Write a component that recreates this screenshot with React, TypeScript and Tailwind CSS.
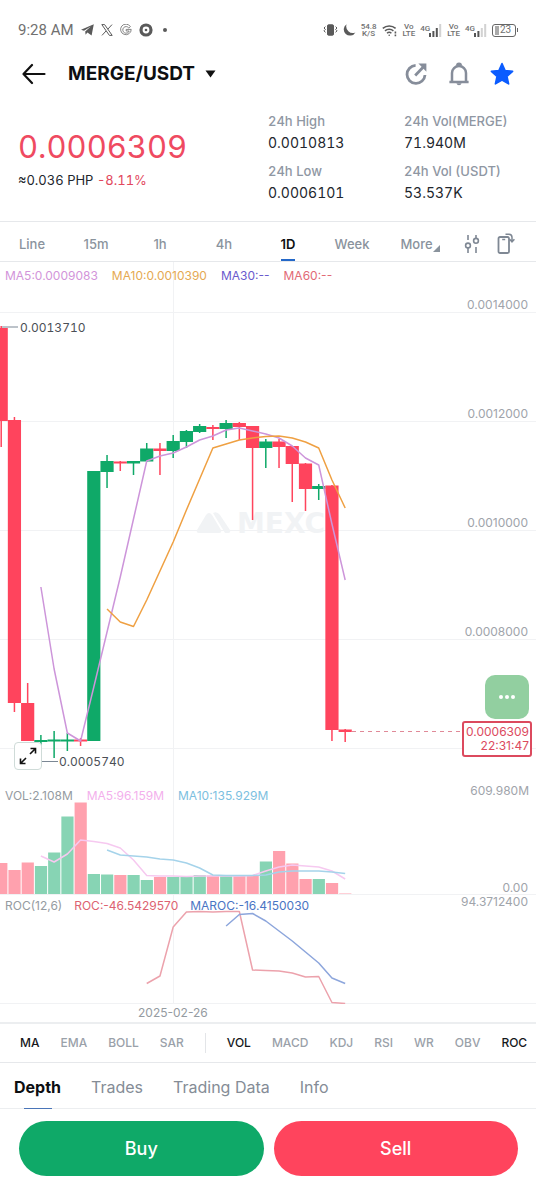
import type { ReactNode } from "react";

const UP = "#0fa968";
const DOWN = "#ff445d";
const GRID = "#f1f2f4";

const STEP = 13.23;
const cx = (i: number) => 1.2 + STEP * i;

// [up, open/close top, open/close bottom, high, low]
const candles: [number, number, number, number, number][] = [
  [0, 328, 421, 326, 447],
  [0, 420, 703, 417, 712],
  [0, 703, 741, 683, 741],
  [1, 740, 742, 735, 762],
  [1, 739.5, 741.5, 731, 758],
  [1, 739.5, 741.5, 733, 751],
  [0, 739.5, 741.5, 738, 746],
  [1, 471, 741, 471, 741],
  [1, 461, 472, 455, 488],
  [0, 461.5, 463.5, 461, 471],
  [1, 461, 463.5, 461, 475],
  [1, 448.5, 461.5, 443, 462],
  [0, 448.5, 451, 443, 475],
  [1, 441, 451, 435, 458],
  [1, 431, 442, 430, 448],
  [1, 426, 432, 424, 433],
  [0, 427, 429, 425, 440],
  [1, 423, 429, 420, 438],
  [0, 423, 427, 422, 440],
  [0, 426, 448, 426, 520],
  [1, 441.5, 448, 439, 468],
  [0, 441.5, 447, 439, 468],
  [0, 446, 464, 446, 502],
  [0, 463.5, 489, 463, 511],
  [1, 486, 489, 484, 500],
  [0, 485.5, 730, 485, 741],
  [0, 729.5, 732, 729, 742],
];

const volumes = [
  863, 870, 862.5, 866, 852.5, 816.5, 802.5, 874, 874.5, 875, 875, 880, 877, 877, 876, 875, 875.5,
  876, 876, 876, 861.5, 851, 863.5, 879, 879, 883, 893.5,
];

const ma5 = [
  587, 669, 733, 741, 687, 632, 577, 519, 461, 456, 453, 447, 440, 436, 430, 428, 431, 434, 438,
  446, 458, 465, 524, 580,
];
const ma10 = [
  609, 622, 626.5, 600, 571, 542, 510, 479, 448, 444, 440, 438, 436.5, 436, 438, 442, 448, 480, 508,
];
const volMa5 = [
  856, 862, 854, 840, 841.5, 843.5, 848, 860, 875.5, 876, 876, 876.5, 876, 876, 876, 876, 875.5,
  871, 867, 865, 866, 867, 871, 879,
];
const volMa10 = [
  850, 855, 856, 857, 859, 860, 863, 868, 875, 875.5, 875.5, 875.5, 875, 872, 871, 871, 871, 872,
  873.5,
];
const roc = [
  983.5, 976, 927, 912, 911.5, 912, 911.5, 911.5, 970, 970.5, 971, 973, 977, 976.5, 1002.5, 1003.5,
];
const maroc = [926, 914.5, 913.5, 921, 931, 941, 952, 963, 978, 983.5];

const gridRows = [
  { y: 312, label: "0.0014000" },
  { y: 421, label: "0.0012000" },
  { y: 530, label: "0.0010000" },
  { y: 639, label: "0.0008000" },
  { y: 748, label: "" },
];

const Series = ({ data, start, color }: { data: number[]; start: number; color: string }) => (
  <polyline
    points={data.map((y, i) => `${cx(start + i)},${y}`).join(" ")}
    fill="none"
    stroke={color}
    strokeWidth="1.5"
    strokeLinejoin="round"
  />
);

const Pane = ({ top, className, children }: { top: number; className: string; children: ReactNode }) => (
  <svg className={`block w-full text-[12px] ${className}`} aria-hidden="true">
    <g transform={`translate(0 ${-top})`}>
      <line x1="173.5" x2="173.5" y1={top} y2={top + 522} stroke={GRID} />
      {children}
    </g>
  </svg>
);

const Legend = ({ items, className }: { items: [string, string][]; className: string }) => (
  <div className={`absolute left-[5px] flex text-[12px] leading-4 ${className}`}>
    {items.map(([text, color]) => (
      <span key={text} className={color}>
        {text}
      </span>
    ))}
  </div>
);

const Stat = ({ label, value }: { label: string; value: string }) => (
  <div>
    <dt className="text-[13px] leading-5 font-medium text-[#8f97a3]">{label}</dt>
    <dd className="mt-0.5 text-[14px] leading-5 text-[#22262d]">{value}</dd>
  </div>
);

const TwoLine = ({ a, b }: { a: string; b: string }) => (
  <span className="flex flex-col text-center text-[8px] leading-[7px] font-medium">
    <span>{a}</span>
    <span>{b}</span>
  </span>
);

const Signal = ({ bars }: { bars: number }) => (
  <span className="flex">
    <span className="-mr-0.5 text-[8px] leading-[9px] font-medium">4G</span>
    <svg width="14" height="13" viewBox="0 0 14 13">
      {[9, 7, 4, 0].map((y, i) => (
        <rect key={y} x={1 + i * 3.4} y={y} width="2" height={13 - y} fill={i < bars ? "#555" : "#d2d2d2"} />
      ))}
    </svg>
  </span>
);

const StatusBar = () => (
  <div className="flex h-5 items-center justify-between pr-4.5 pl-4.5 font-[Roboto,sans-serif] text-[#707070]">
    <div className="flex items-center gap-[7px]">
      <span className="text-[15px] leading-5">9:28 AM</span>
      <svg width="13" height="12" viewBox="0 0 13 12" fill="#5a5a5a">
        <path d="M0 5.8 12.8.2 10.6 11.6 6.4 8.6 4.6 10.8 4.2 7.4 9.8 2.6 3 6.8Z" />
      </svg>
      <svg width="12" height="12" viewBox="0 0 12 12" fill="none" stroke="#5a5a5a">
        <path d="M.8.6H3.6L11.2 11.4H8.4ZM11 .6 6.8 5.2M5 7 1 11.4" />
      </svg>
      <svg width="12" height="12" viewBox="0 0 12 12" fill="none" stroke="#777">
        <path d="M10.4 2.6A5.3 5.3 0 1 0 11.2 5.4H6.2V7H9.2A3.3 3.3 0 1 1 8.8 4Z" strokeWidth=".9" />
      </svg>
      <svg width="14" height="14" viewBox="0 0 14 14">
        <circle cx="7" cy="7" r="5" fill="none" stroke="#5a5a5a" strokeWidth="3.2" />
        <circle cx="7" cy="7" r="1.3" fill="#5a5a5a" />
      </svg>
      <svg width="12" height="6" viewBox="0 0 12 6">
        <circle cx="5" cy="3" r="2" fill="#5a5a5a" />
      </svg>
    </div>
    <div className="flex items-center gap-[5px]">
      <svg width="15" height="12" viewBox="0 0 15 12" fill="none" stroke="#5a5a5a">
        <rect x="4.5" y=".8" width="6" height="10.4" rx="1" fill="#5a5a5a" />
        <path d="M2.4 2.6 1 4 2.4 5.4 1 6.8 2.4 8.4M12.6 2.6 14 4 12.6 5.4 14 6.8 12.6 8.4" />
      </svg>
      <svg width="13" height="12" viewBox="0 0 13 12" fill="#5a5a5a">
        <path d="M3.6.2A6.2 6.2 0 1 0 12.4 8.4 6.6 6.6 0 0 1 3.6.2Z" />
      </svg>
      <TwoLine a="54.8" b="K/S" />
      <svg width="16" height="13" viewBox="0 0 16 13" fill="none" stroke="#5a5a5a" strokeWidth="1.5">
        <path d="M.8 4.4a9.4 9.4 0 0 1 12.8 0M3 6.9a6.2 6.2 0 0 1 8.4 0M5 9.2a3.3 3.3 0 0 1 4.4 0" />
        <circle cx="7.2" cy="11.2" r=".8" fill="#5a5a5a" stroke="none" />
        <path d="M13.4 7.6V9.4M13.4 10.4V12.2" strokeWidth="1.6" />
      </svg>
      <TwoLine a="Vo" b="LTE" />
      <Signal bars={3} />
      <TwoLine a="Vo" b="LTE" />
      <Signal bars={2} />
      <span className="flex items-center">
        <span className="flex h-[13px] w-6 items-center rounded-[3px] border border-[#666] pl-0.5 text-[10px] leading-none">
          <span className="mr-px h-[9px] w-1 bg-[#aaa]" />
          23
        </span>
        <span className="ml-px h-1 w-px bg-[#666]" />
      </span>
    </div>
  </div>
);

const Header = () => (
  <header className="mt-3 flex h-11 items-center px-[22px]">
    <button type="button" aria-label="Back">
      <svg width="25" height="22" viewBox="0 0 25 22" fill="none" stroke="#111" strokeWidth="2.2" strokeLinecap="round" strokeLinejoin="round">
        <path d="M22.500 11H1.500M10 2 1.500 11l8.500 9" />
      </svg>
    </button>
    <button type="button" className="ml-[21px] flex items-center gap-2.5">
      <h1 className="text-[19px] leading-6 font-bold text-[#0d0f12]">MERGE/USDT</h1>
      <svg width="11" height="8" viewBox="0 0 11 8">
        <path d="M.5.5h10L5.5 7.5Z" fill="#111" />
      </svg>
    </button>
    <div className="ml-auto flex items-center gap-[19px]">
      <button type="button" aria-label="Share">
        <svg width="24" height="24" viewBox="0 0 24 24" fill="none" stroke="#868d9a" strokeWidth="2.8">
          <path d="M11.6 3.4A9 9 0 1 0 21 13" />
          <path d="m11.2 13.4 8.6-8.8" />
          <path d="M14.4 1.6H22.4V9.8Z" fill="#868d9a" stroke="none" />
        </svg>
      </button>
      <button type="button" aria-label="Price alert">
        <svg width="24" height="24" viewBox="0 0 24 24" fill="none" stroke="#868d9a" strokeWidth="2.5">
          <path d="M5 20V11a7 7 0 0 1 14 0v9M2.4 20H21.6" />
          <path d="M9 3.4a3 3 0 0 1 6 0ZM9.4 21.2a2.7 2.7 0 0 0 5.2 0Z" fill="#868d9a" stroke="none" />
        </svg>
      </button>
      <button type="button" aria-label="Favorite">
        <svg width="24" height="24" viewBox="0 0 24 24" fill="#0b5cff" stroke="#0b5cff" strokeWidth="1.6" strokeLinejoin="round">
          <path d="m12 1.6 3.1 6.9 7.5.8-5.6 5 1.6 7.6L12 18.1l-6.6 3.8L7 14.3l-5.6-5 7.5-.8Z" />
        </svg>
      </button>
    </div>
  </header>
);

const Summary = () => (
  <section className="flex border-b border-[#e6e8eb] pt-[15px] pr-5 pb-[18px] pl-[18px] tabular-nums">
    <div className="flex-1 pt-4">
      <p className="text-[31px] leading-10 text-[#ef4a61]">0.0006309</p>
      <p className="mt-[3px] text-[13px] leading-5 text-[#22262d]">
        ≈0.036 PHP <span className="text-[#e2485e]">-8.11%</span>
      </p>
    </div>
    <dl className="grid grid-cols-[136px_112px] gap-y-2">
      <Stat label="24h High" value="0.0010813" />
      <Stat label="24h Vol(MERGE)" value="71.940M" />
      <Stat label="24h Low" value="0.0006101" />
      <Stat label="24h Vol (USDT)" value="53.537K" />
    </dl>
  </section>
);

const intervals = ["Line", "15m", "1h", "4h", "1D", "Week"];

const Intervals = () => (
  <nav className="flex h-10 border-b border-[#e6e8eb] text-[13px] font-medium text-[#8a939d]">
    {intervals.map((name) => (
      <button
        key={name}
        type="button"
        className={name === "1D" ? "relative flex-1 pb-1 pt-2.5 font-semibold text-[#0d0f12]" : "flex-1 pb-1 pt-2.5"}
      >
        {name}
        {name === "1D" && <span className="absolute bottom-0 left-1/2 h-0.5 w-3.5 -translate-x-1/2 bg-[#2468c8]" />}
      </button>
    ))}
    <button type="button" className="flex w-18 items-center justify-center pt-1.5">
      More
      <svg width="7" height="7" viewBox="0 0 7 7" className="mt-2">
        <path d="M7 0V7H0Z" fill="#8a939d" />
      </svg>
    </button>
    <div className="flex w-20 items-center gap-[17px] pl-2 pt-1">
      <button type="button" aria-label="Indicators">
        <svg width="16" height="20" viewBox="0 0 16 20" fill="none" stroke="#7f8894" strokeWidth="1.6">
          <path d="M4 1v5M4 14v5M12 1v3M12 13v6" />
          <circle cx="4" cy="11.5" r="2.4" />
          <circle cx="12" cy="6.8" r="2.4" />
        </svg>
      </button>
      <button type="button" aria-label="Rotate chart">
        <svg width="18" height="21" viewBox="0 0 18 21" fill="none" stroke="#7f8894" strokeWidth="1.8">
          <rect x="1.5" y="4" width="10.5" height="16" rx="1.5" />
          <path d="M5.2 6.4h3M8.5 1.2H12Q15 1.2 15 4.5V8M12.6 6.2 15 8.8l2.4-2.6" strokeWidth="1.5" />
        </svg>
      </button>
    </div>
  </nav>
);

const Chart = () => (
  <section className="border-b-2 border-[#eceef0]">
    <div className="relative">
      <Pane top={262} className="h-[522px]">
        {gridRows.map(({ y, label }) => (
          <g key={y}>
            <line x1="0" x2="100%" y1={y + 0.5} y2={y + 0.5} stroke={GRID} />
            <text x="100%" dx="-8" y={y - 3} textAnchor="end" fill="#a0a4ab">
              {label}
            </text>
          </g>
        ))}

        <g fill="#f1f3f5">
          <path d="M197 530 206 515Q209 511 212 515L221 530Q222 533 219 533H199Q196 533 197 530Z" />
          <path d="M213 513Q217 511 220 515L230 530Q231 533 228 533H225Z" />
          <text x="237" y="533" className="font-['DejaVu_Sans',sans-serif] text-[28px] font-bold">
            MEXC
          </text>
        </g>

        {candles.map(([up, top, bottom, high, low], i) => (
          <g key={i} fill={up ? UP : DOWN}>
            <rect x={cx(i) - 0.75} y={high} width="1.5" height={low - high} />
            <rect x={cx(i) - 6.6} y={top} width="13.2" height={bottom - top} />
          </g>
        ))}
        <Series data={ma5} start={3} color="#cd95da" />
        <Series data={ma10} start={8} color="#efa042" />

        <path d="M2 327H18M41 761.5H58" stroke="#7b8794" />
        <g fill="#4b4f56" className="tabular-nums">
          <text x="20" y="332">0.0013710</text>
          <text x="59" y="766">0.0005740</text>
        </g>
        <line x1="352" x2="100%" y1="731.5" y2="731.5" stroke="#e08a98" strokeDasharray="4 4" />
      </Pane>
      <Legend
        className="top-1.5 gap-3.5"
        items={[
          ["MA5:0.0009083", "text-[#d294da]"],
          ["MA10:0.0010390", "text-[#e5a952]"],
          ["MA30:--", "text-[#6a5acd]"],
          ["MA60:--", "text-[#e26a76]"],
        ]}
      />
      <button
        type="button"
        aria-label="Full screen"
        className="absolute top-[480px] left-3.5 flex h-7 w-7 items-center justify-center rounded border border-[#cfdbd8] bg-white"
      >
        <svg width="18" height="18" viewBox="0 0 18 18" fill="none" stroke="#111" strokeWidth="1.6">
          <path d="M11 7l5-5M11.5 1.5H16.5V6.5M7 11l-5 5M1.5 11.5V16.5H6.5" />
        </svg>
      </button>
      <div className="absolute top-[459px] right-1 rounded-[3px] border-2 border-[#dc4a5e] bg-white py-0.5 pr-px pl-0.5 text-right text-[12px] leading-[14px] text-[#dc4a5e]">
        0.0006309
        <br />
        22:31:47
      </div>
      <button
        type="button"
        aria-label="More actions"
        className="absolute top-[413px] right-[7px] flex h-11 w-11 items-center justify-center gap-0.5 rounded-[10px] bg-[#92cfa0]"
      >
        <span className="h-1 w-1 rounded-full bg-white" />
        <span className="h-1 w-1 rounded-full bg-white" />
        <span className="h-1 w-1 rounded-full bg-white" />
      </button>
    </div>

    <div className="relative">
      <Pane top={784} className="h-[110px]">
        {volumes.map((y, i) => (
          <rect key={i} x={cx(i) - 6} y={y} width="12.2" height={894 - y} fill={candles[i][0] ? "#87d4b4" : "#ffa1ae"} />
        ))}
        <Series data={volMa5} start={3} color="#f6c9f0" />
        <Series data={volMa10} start={8} color="#a5d3ea" />
        <g fill="#a0a4ab" textAnchor="end">
          <text x="100%" dx="-7" y="795">609.980M</text>
          <text x="100%" dx="-8" y="892">0.00</text>
        </g>
      </Pane>
      <Legend
        className="top-1 gap-3.5"
        items={[
          ["VOL:2.108M", "text-[#959ba1]"],
          ["MA5:96.159M", "text-[#f3b0ec]"],
          ["MA10:135.929M", "text-[#7cc0e0]"],
        ]}
      />
    </div>

    <div className="relative">
      <Pane top={894} className="h-[110px]">
        <line x1="0" x2="100%" y1="894.5" y2="894.5" stroke={GRID} />
        <line x1="0" x2="100%" y1="1003.5" y2="1003.5" stroke={GRID} />
        <Series data={roc} start={11} color="#eca2ac" />
        <Series data={maroc} start={17} color="#8da6dc" />
        <text x="100%" dx="-8" y="906" textAnchor="end" fill="#a0a4ab">94.3712400</text>
      </Pane>
      <Legend
        className="top-1 gap-3"
        items={[
          ["ROC(12,6)", "text-[#959ba1]"],
          ["ROC:-46.5429570", "text-[#dd6271]"],
          ["MAROC:-16.4150030", "text-[#4a75c4]"],
        ]}
      />
    </div>
    <p className="pl-[138px] text-[12px] leading-[18px] text-[#959ba1]">2025-02-26</p>
  </section>
);

const Indicators = () => {
  const main = ["MA", "EMA", "BOLL", "SAR"];
  const sub = ["VOL", "MACD", "KDJ", "RSI", "WR", "OBV", "ROC"];
  const active = ["MA", "VOL", "ROC"];
  const item = (name: string) => (
    <button key={name} type="button" className={active.includes(name) ? "text-[#16181c]" : "text-[#9aa1a9]"}>
      {name}
    </button>
  );

  return (
    <div className="flex h-[39px] items-center gap-[21px] overflow-hidden border-b border-[#e6e8eb] pl-5 text-[12px] font-medium">
      {main.map(item)}
      <span className="h-5 w-px shrink-0 bg-[#e3e5e8]" />
      {sub.map(item)}
    </div>
  );
};

const sections = ["Depth", "Trades", "Trading Data", "Info"];

export default function App() {
  return (
    <div className="overflow-hidden bg-white pt-5 pb-6 font-[Inter,sans-serif]">
      <StatusBar />
      <Header />
      <Summary />
      <Intervals />
      <Chart />
      <Indicators />
      <nav className="flex h-[46px] gap-[30px] border-b border-[#eceef0] pl-3.5 text-[16px] text-[#858c96]">
        {sections.map((name) => (
          <button key={name} type="button" className={name === "Depth" ? "relative pt-0.5 font-bold text-[#0d0f12]" : "pt-0.5"}>
            {name}
            {name === "Depth" && <span className="absolute -bottom-px left-1/2 h-px w-7 -translate-x-1/2 bg-[#4a75b8]" />}
          </button>
        ))}
      </nav>
      <div className="flex gap-2.5 pt-3 pr-[18px] pl-[19px] text-[18px] font-medium text-white">
        <button type="button" className="h-[55px] flex-1 rounded-full bg-[#0fa968]">
          Buy
        </button>
        <button type="button" className="h-[55px] flex-1 rounded-full bg-[#ff445d]">
          Sell
        </button>
      </div>
    </div>
  );
}
